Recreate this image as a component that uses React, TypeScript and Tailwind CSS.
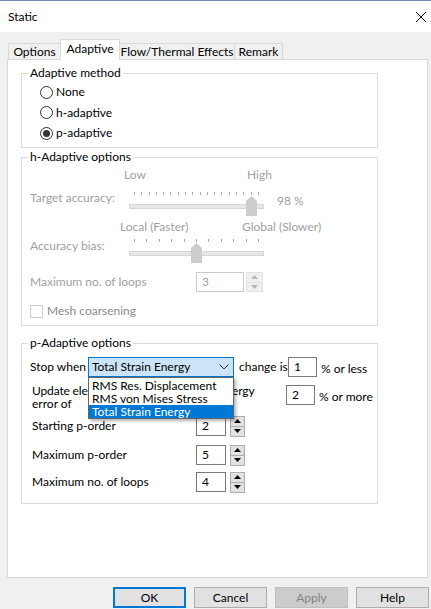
import React from "react";

const Tick = () => <div className="w-px h-[3px] bg-[#a8a8a8]" />;

const Slider = ({ ticks, thumb }: { ticks: number; thumb: number }) => (
    <div className="relative w-[135px] h-[26px]">
        {/* tick marks */}
        <div className="flex justify-between px-[5px] pt-[2px]">
            {Array.from({ length: ticks }).map((_, i) => (
                <Tick key={i} />
            ))}
        </div>
        {/* track */}
        <div className="mt-[9px] h-[5px] bg-[#e7e7e7] border border-[#d6d6d6]" />
        {/* thumb */}
        <svg
            className="absolute top-[6px]"
            style={{ left: thumb }}
            width="11"
            height="20"
            viewBox="0 0 11 20"
        >
            <polygon points="0,5 5.5,0 11,5 11,20 0,20" fill="#cccccc" />
        </svg>
    </div>
);

const Radio = ({ label, checked }: { label: string; checked?: boolean }) => (
    <div className="flex items-center h-[20.5px]">
        <div className="w-[13px] h-[13px] rounded-full border border-[#333333] bg-white flex items-center justify-center">
            {checked && <div className="w-[7px] h-[7px] rounded-full bg-[#333333]" />}
        </div>
        <span className="ml-[3px]">{label}</span>
    </div>
);

const Spinner = ({ disabled }: { disabled?: boolean }) => {
    const c = disabled ? "#b8b8b8" : "#000000";
    const box = disabled
        ? "bg-[#f0f0f0] border border-[#e3e3e3]"
        : "bg-[#e1e1e1] border border-[#adadad]";
    return (
        <div className={`flex flex-col h-full ${disabled ? "w-[17px]" : "w-[15px]"}`}>
            <div className={`flex-1 flex items-center justify-center ${box}`}>
                <svg width="7" height="4" viewBox="0 0 7 4">
                    <polygon points="0,4 3.5,0 7,4" fill={c} />
                </svg>
            </div>
            <div className={`flex-1 flex items-center justify-center -mt-px ${box}`}>
                <svg width="7" height="4" viewBox="0 0 7 4">
                    <polygon points="0,0 7,0 3.5,4" fill={c} />
                </svg>
            </div>
        </div>
    );
};

const NumBox = ({ value, w }: { value: string; w: string }) => (
    <div className={`${w} h-full border border-[#7a7a7a] bg-white pl-[5px] flex items-center`}>
        {value}
    </div>
);

const Group = ({ title, h, className, children }: { title: string; h: string; className?: string; children: React.ReactNode }) => (
    <fieldset className={`w-[357px] ${h} border border-[#dcdcdc] ${className ?? ""}`}>
        <legend className="ml-[6px] px-[2px] leading-[16px]">{title}</legend>
        {children}
    </fieldset>
);

const Btn = ({ label, variant }: { label: string; variant?: "default" | "disabled" }) => {
    let cls = "bg-[#e1e1e1] border border-[#adadad] text-black";
    if (variant === "default") cls = "bg-[#e1e1e1] border-2 border-[#0078d7] text-black";
    if (variant === "disabled") cls = "bg-[#cccccc] border border-[#bfbfbf] text-[#838383]";
    return (
        <div className={`w-[73px] h-[21px] flex items-center justify-center ${cls}`}>{label}</div>
    );
};

export default function App() {
    return (
        <div className="w-[431px] h-[609px] overflow-hidden bg-[#f0f0f0] flex flex-col text-[12px] leading-[16px] text-black font-['Lato',sans-serif]">
            {/* Title bar */}
            <div className="h-[32px] shrink-0 bg-white border-t border-[#6d8cb8] flex items-center justify-between pl-[8px] pr-[5px]">
                <span>Static</span>
                <svg width="10" height="10" viewBox="0 0 10 10">
                    <path d="M0 0L10 10M10 0L0 10" stroke="#000" strokeWidth="1" />
                </svg>
            </div>

            {/* Tabs */}
            <div className="flex items-end h-[21px] mt-[7px] pl-[8px] shrink-0">
                <div className="w-[53px] h-[17px] border border-b-0 border-[#d9d9d9] flex items-center justify-center">Options</div>
                <div className="relative z-10 w-[60px] h-[21px] bg-white border border-b-0 border-[#d9d9d9] -ml-px flex justify-center pt-[1px]">Adaptive</div>
                <div className="w-[116px] h-[17px] border border-b-0 border-[#d9d9d9] -ml-px flex items-center justify-center">Flow/Thermal Effects</div>
                <div className="w-[49px] h-[17px] border border-b-0 border-[#d9d9d9] -ml-px flex items-center justify-center">Remark</div>
            </div>

            {/* Tab panel */}
            <div className="ml-[7px] w-[421px] h-[519px] -mt-px shrink-0 bg-white border border-[#d9d9d9] pl-[13px] pt-[5px] flex flex-col">
                {/* Adaptive method */}
                <Group title="Adaptive method" h="h-[83px]">
                    <div className="pl-[18px] pt-[1px]">
                        <Radio label="None" />
                        <Radio label="h-adaptive" />
                        <Radio label="p-adaptive" checked />
                    </div>
                </Group>

                {/* h-Adaptive options */}
                <Group title="h-Adaptive options" h="h-[177px]" className="mt-[1px]">
                    <div className="pl-[8px] text-[#a0a0a0] flex flex-col">
                        <div className="flex h-[16px] mt-[2px] pl-[94px]">
                            <span className="w-[123px]">Low</span>
                            <span>High</span>
                        </div>
                        <div className="flex mt-[7px]">
                            <span className="w-[99px]">Target accuracy:</span>
                            <Slider ticks={18} thumb={117} />
                            <span className="ml-[13px] mt-[3px]">98 %</span>
                        </div>
                        <div className="flex h-[16px] mt-[3px] pl-[90px]">
                            <span className="w-[122px]">Local (Faster)</span>
                            <span>Global (Slower)</span>
                        </div>
                        <div className="flex mt-[2px]">
                            <span className="w-[99px] mt-[1px]">Accuracy bias:</span>
                            <Slider ticks={11} thumb={62} />
                        </div>
                        <div className="flex items-center h-[20px] mt-[9px]">
                            <span className="w-[166px]">Maximum no. of loops</span>
                            <div className="w-[48px] h-full border border-[#cccccc] pl-[5px] flex items-center">3</div>
                            <div className="ml-[2px] h-full">
                                <Spinner disabled />
                            </div>
                        </div>
                        <div className="flex items-center h-[16px] mt-[11px]">
                            <div className="w-[13px] h-[13px] border border-[#cccccc] bg-white" />
                            <span className="ml-[4px] text-[#8a8a8a]">Mesh coarsening</span>
                        </div>
                    </div>
                </Group>

                {/* p-Adaptive options */}
                <Group title="p-Adaptive options" h="h-[169px]" className="mt-[9px]">
                    <div className="pl-[8px] flex flex-col">
                        <div className="flex items-center h-[20px] mt-[6px]">
                            <span className="w-[58px]">Stop when</span>
                            <div className="relative w-[146px] h-full z-20">
                                <div className="h-full bg-[#cce4f7] border border-[#0078d7] pl-[3px] pr-[4px] flex items-center justify-between">
                                    <span>Total Strain Energy</span>
                                    <svg width="10" height="6" viewBox="0 0 10 6">
                                        <path d="M0.5 0.5L5 5L9.5 0.5" fill="none" stroke="#333" strokeWidth="1" />
                                    </svg>
                                </div>
                                {/* open dropdown list */}
                                <div className="absolute left-0 top-full w-[146px] bg-white border border-[#646464] pt-[1px] shadow-[2px_2px_3px_rgba(0,0,0,0.3)] leading-[13px]">
                                    <div className="h-[13px] pl-[3px]">RMS Res. Displacement</div>
                                    <div className="h-[13px] pl-[3px]">RMS von Mises Stress</div>
                                    <div className="h-[13px] pl-[3px] bg-[#0078d7] text-white">Total Strain Energy</div>
                                </div>
                            </div>
                            <span className="ml-[5px] w-[49px]">change is</span>
                            <NumBox value="1" w="w-[29px]" />
                            <span className="ml-[4px] mt-[3px]">% or less</span>
                        </div>
                        <div className="flex mt-[7px]">
                            <div className="w-[256px] pl-[2px] leading-[13px] whitespace-nowrap">
                                <div className="w-[223px] tracking-[-0.15px]">
                                    Update elements with relative strain energy
                                </div>
                                <div>error of</div>
                            </div>
                            <div className="h-[20px] mt-[1px] flex">
                                <NumBox value="2" w="w-[29px]" />
                            </div>
                            <span className="ml-[4px] mt-[5px]">% or more</span>
                        </div>
                        <div className="flex items-center h-[20px] mt-[6px]">
                            <span className="w-[166px] pl-[2px]">Starting p-order</span>
                            <NumBox value="2" w="w-[30px]" />
                            <div className="ml-[4px] h-[21px]">
                                <Spinner />
                            </div>
                        </div>
                        <div className="flex items-center h-[20px] mt-[9px]">
                            <span className="w-[166px] pl-[2px]">Maximum p-order</span>
                            <NumBox value="5" w="w-[30px]" />
                            <div className="ml-[4px] h-[21px]">
                                <Spinner />
                            </div>
                        </div>
                        <div className="flex items-center h-[20px] mt-[7px]">
                            <span className="w-[166px] pl-[2px]">Maximum no. of loops</span>
                            <NumBox value="4" w="w-[30px]" />
                            <div className="ml-[4px] h-[21px]">
                                <Spinner />
                            </div>
                        </div>
                    </div>
                </Group>
            </div>

            {/* Buttons */}
            <div className="flex justify-end gap-[8px] pr-[2px] mt-[9px]">
                <Btn label="OK" variant="default" />
                <Btn label="Cancel" />
                <Btn label="Apply" variant="disabled" />
                <Btn label="Help" />
            </div>
        </div>
    );
}
